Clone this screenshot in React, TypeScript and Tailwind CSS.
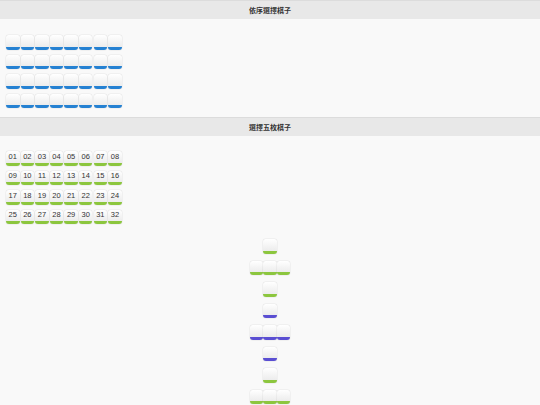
import React from 'react'

type Tone = 'blue' | 'green' | 'purple'

const toneClass: Record<Tone, string> = {
    blue: 'border-[#2581d2]',
    green: 'border-[#8cc63e]',
    purple: 'border-[#5a4ed2]',
}

function Piece({ tone, label }: { tone: Tone; label?: string }) {
    return (
        <div
            className={`w-[13.5px] h-[14.5px] rounded-[3px] border-b-[3px] ${toneClass[tone]} bg-gradient-to-b from-white to-[#ececec] shadow-[0_0_1px_rgba(0,0,0,0.35)] flex justify-center`}
        >
            {label && (
                <span className="text-[7.5px] leading-none pt-[1.5px] text-[#333]" style={{ fontFamily: '"Liberation Sans", Arial, sans-serif' }}>
                    {label}
                </span>
            )}
        </div>
    )
}

function Header({ title }: { title: string }) {
    return (
        <div className="h-[19px] bg-[#e8e8e8] border-t border-[#dcdcdc] flex items-center justify-center">
            <span className="text-[7px] font-bold text-[#333]" style={{ fontFamily: '"Noto Sans CJK TC", sans-serif' }}>
                {title}
            </span>
        </div>
    )
}

const rows = [0, 1, 2, 3]
const cols = [0, 1, 2, 3, 4, 5, 6, 7]

// shape rows for the five-piece crosses: [count, tone]
const shape: [number, Tone][] = [
    [1, 'green'],
    [3, 'green'],
    [1, 'green'],
    [1, 'purple'],
    [3, 'purple'],
    [1, 'purple'],
    [1, 'green'],
    [3, 'green'],
]

export default function App() {
    return (
        <div className="w-[540px] h-[405px] overflow-hidden bg-[#f9f9f9]">
            <Header title="依序選擇棋子" />
            <div className="pt-[16px] pb-[9px] pl-[6px] flex flex-col gap-[5px]">
                {rows.map((r) => (
                    <div key={r} className="flex gap-[1.1px]">
                        {cols.map((c) => (
                            <Piece key={c} tone="blue" />
                        ))}
                    </div>
                ))}
            </div>
            <Header title="選擇五枚棋子" />
            <div className="pt-[15px] pl-[6px] flex flex-col gap-[5px]">
                {rows.map((r) => (
                    <div key={r} className="flex gap-[1.1px]">
                        {cols.map((c) => (
                            <Piece key={c} tone="green" label={String(r * 8 + c + 1).padStart(2, '0')} />
                        ))}
                    </div>
                ))}
            </div>
            <div className="pt-[15px] flex flex-col items-center gap-[7px]">
                {shape.map(([n, tone], i) => (
                    <div key={i} className="flex">
                        {Array.from({ length: n }).map((_, j) => (
                            <Piece key={j} tone={tone} />
                        ))}
                    </div>
                ))}
            </div>
        </div>
    )
}
